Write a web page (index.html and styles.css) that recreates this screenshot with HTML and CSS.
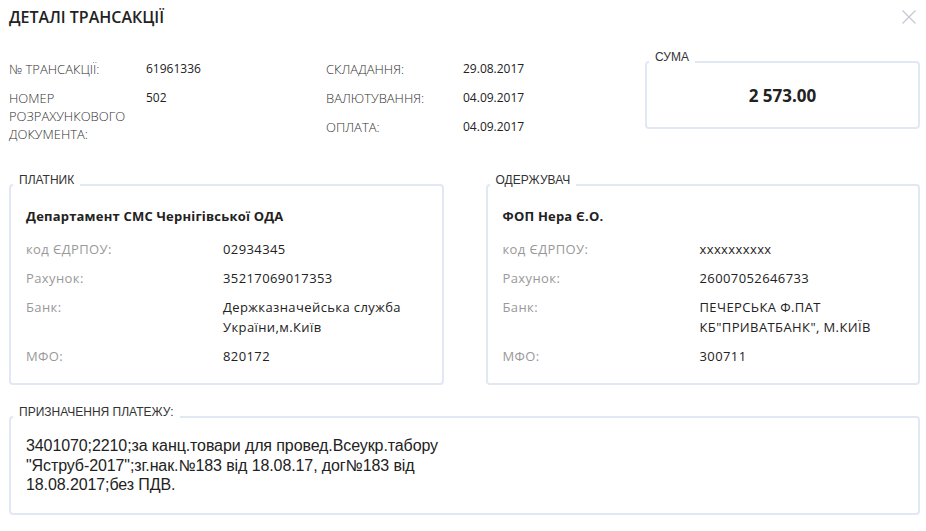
FILE: index.html
```html
<!DOCTYPE html>
<html lang="uk">
<head>
    <meta charset="UTF-8">
    <meta name="viewport" content="width=device-width, initial-scale=1.0">
    <title>Деталі трансакції</title>
    <link rel="stylesheet" href="styles.css">
</head>
<body>
    <div class="modal">
        <div class="modal-head">
            <h1 class="modal-title">ДЕТАЛІ ТРАНСАКЦІЇ</h1>
            <button class="close" type="button" aria-label="Закрити">
                <svg width="14" height="14" viewBox="0 0 14 14">
                    <path d="M0.5 0.5 L13.5 13.5 M13.5 0.5 L0.5 13.5" stroke="#c3c8d2" stroke-width="1.2" fill="none"/>
                </svg>
            </button>
        </div>

        <div class="summary">
            <dl class="info info-left">
                <dt>№ ТРАНСАКЦІЇ:</dt>
                <dd>61961336</dd>
                <dt>НОМЕР РОЗРАХУНКОВОГО ДОКУМЕНТА:</dt>
                <dd>502</dd>
            </dl>
            <dl class="info info-right">
                <dt>СКЛАДАННЯ:</dt>
                <dd>29.08.2017</dd>
                <dt>ВАЛЮТУВАННЯ:</dt>
                <dd>04.09.2017</dd>
                <dt>ОПЛАТА:</dt>
                <dd>04.09.2017</dd>
            </dl>
            <fieldset class="box sum-box">
                <legend>СУМА</legend>
                <div class="amount">2 573.00</div>
            </fieldset>
        </div>

        <div class="parties">
            <fieldset class="box party">
                <legend>ПЛАТНИК</legend>
                <div class="party-name">Департамент СМС Чернігівської ОДА</div>
                <dl class="party-info">
                    <dt>код ЄДРПОУ:</dt>
                    <dd>02934345</dd>
                    <dt>Рахунок:</dt>
                    <dd>35217069017353</dd>
                    <dt>Банк:</dt>
                    <dd>Держказначейська служба України,м.Київ</dd>
                    <dt>МФО:</dt>
                    <dd>820172</dd>
                </dl>
            </fieldset>
            <fieldset class="box party">
                <legend>ОДЕРЖУВАЧ</legend>
                <div class="party-name">ФОП Нера Є.О.</div>
                <dl class="party-info">
                    <dt>код ЄДРПОУ:</dt>
                    <dd>xxxxxxxxxx</dd>
                    <dt>Рахунок:</dt>
                    <dd>26007052646733</dd>
                    <dt>Банк:</dt>
                    <dd>ПЕЧЕРСЬКА Ф.ПАТ КБ"ПРИВАТБАНК", М.КИЇВ</dd>
                    <dt>МФО:</dt>
                    <dd>300711</dd>
                </dl>
            </fieldset>
        </div>

        <fieldset class="box purpose">
            <legend>ПРИЗНАЧЕННЯ ПЛАТЕЖУ:</legend>
            <p class="purpose-text">3401070;2210;за канц.товари для провед.Всеукр.табору "Яструб-2017";зг.нак.№183 від 18.08.17, дог№183 від 18.08.2017;без ПДВ.</p>
        </fieldset>
    </div>
</body>
</html>
```

FILE: styles.css
```css
body {
    margin: 0;
    background: #fff;
    font-family: "Open Sans", sans-serif;
    color: #222;
}
.modal {
    padding: 0 6px 0 9px;
}
.modal-head {
    display: flex;
    justify-content: space-between;
    align-items: flex-start;
    padding-top: 7px;
}
.modal-title {
    margin: 0;
    font-size: 16px;
    line-height: 20px;
    font-weight: 600;
    color: #222;
}
.close {
    margin: 3px 4px 0 0;
    padding: 0;
    border: 0;
    background: none;
    width: 14px;
    height: 14px;
    cursor: pointer;
}
.close svg {
    display: block;
}

/* top block: ids, dates, amount */
.summary {
    display: flex;
    align-items: flex-start;
    margin-top: 23px;
}
.info {
    display: grid;
    grid-template-columns: 137px 1fr;
    row-gap: 11px;
    margin: 10px 0 0;
    font-size: 12px;
    line-height: 18px;
}
.info dt {
    font-size: 13px;
    font-weight: 300;
    color: #333;
}
.info dd {
    margin: 0;
    color: #222;
}
.info-left {
    width: 317px;
}
.info-left dt:nth-of-type(2) {
    width: 125px;
}
.info-right {
    width: 319px;
}

/* framed boxes */
.box {
    margin: 0;
    min-width: 0;
    padding: 0 15px;
    border: 2px solid #e1e8f4;
    border-radius: 4px;
}
.box legend {
    margin-left: -13px;
    padding: 0 6px 10px;
    font-family: "Liberation Sans", Arial, sans-serif;
    font-size: 12px;
    line-height: 14px;
    color: #333;
}
.sum-box {
    flex: 1;
}
.amount {
    padding: 11px 0 20px;
    text-align: center;
    font-size: 17px;
    line-height: 22px;
    font-weight: 700;
    color: #222;
}

/* payer / receiver */
.parties {
    display: flex;
    gap: 42px;
    margin-top: 30px;
}
.party {
    flex: 1;
    padding-top: 9px;
    padding-bottom: 17px;
}
.party-name {
    font-size: 13px;
    line-height: 20px;
    font-weight: 700;
    letter-spacing: 0.2px;
    color: #222;
}
.party-info {
    display: grid;
    grid-template-columns: 197px 1fr;
    row-gap: 9px;
    margin: 13px 0 0;
    font-size: 13px;
    line-height: 20px;
    letter-spacing: 0.4px;
}
.party-info dt {
    color: #999;
}
.party-info dd {
    margin: 0;
    color: #222;
}

/* purpose */
.purpose {
    margin-top: 20px;
    padding-top: 7px;
    padding-bottom: 18px;
}
.purpose-text {
    margin: 0;
    max-width: 440px;
    font-family: "Liberation Sans", Arial, sans-serif;
    font-size: 16px;
    line-height: 19.5px;
    letter-spacing: -0.1px;
    color: #222;
}
```
